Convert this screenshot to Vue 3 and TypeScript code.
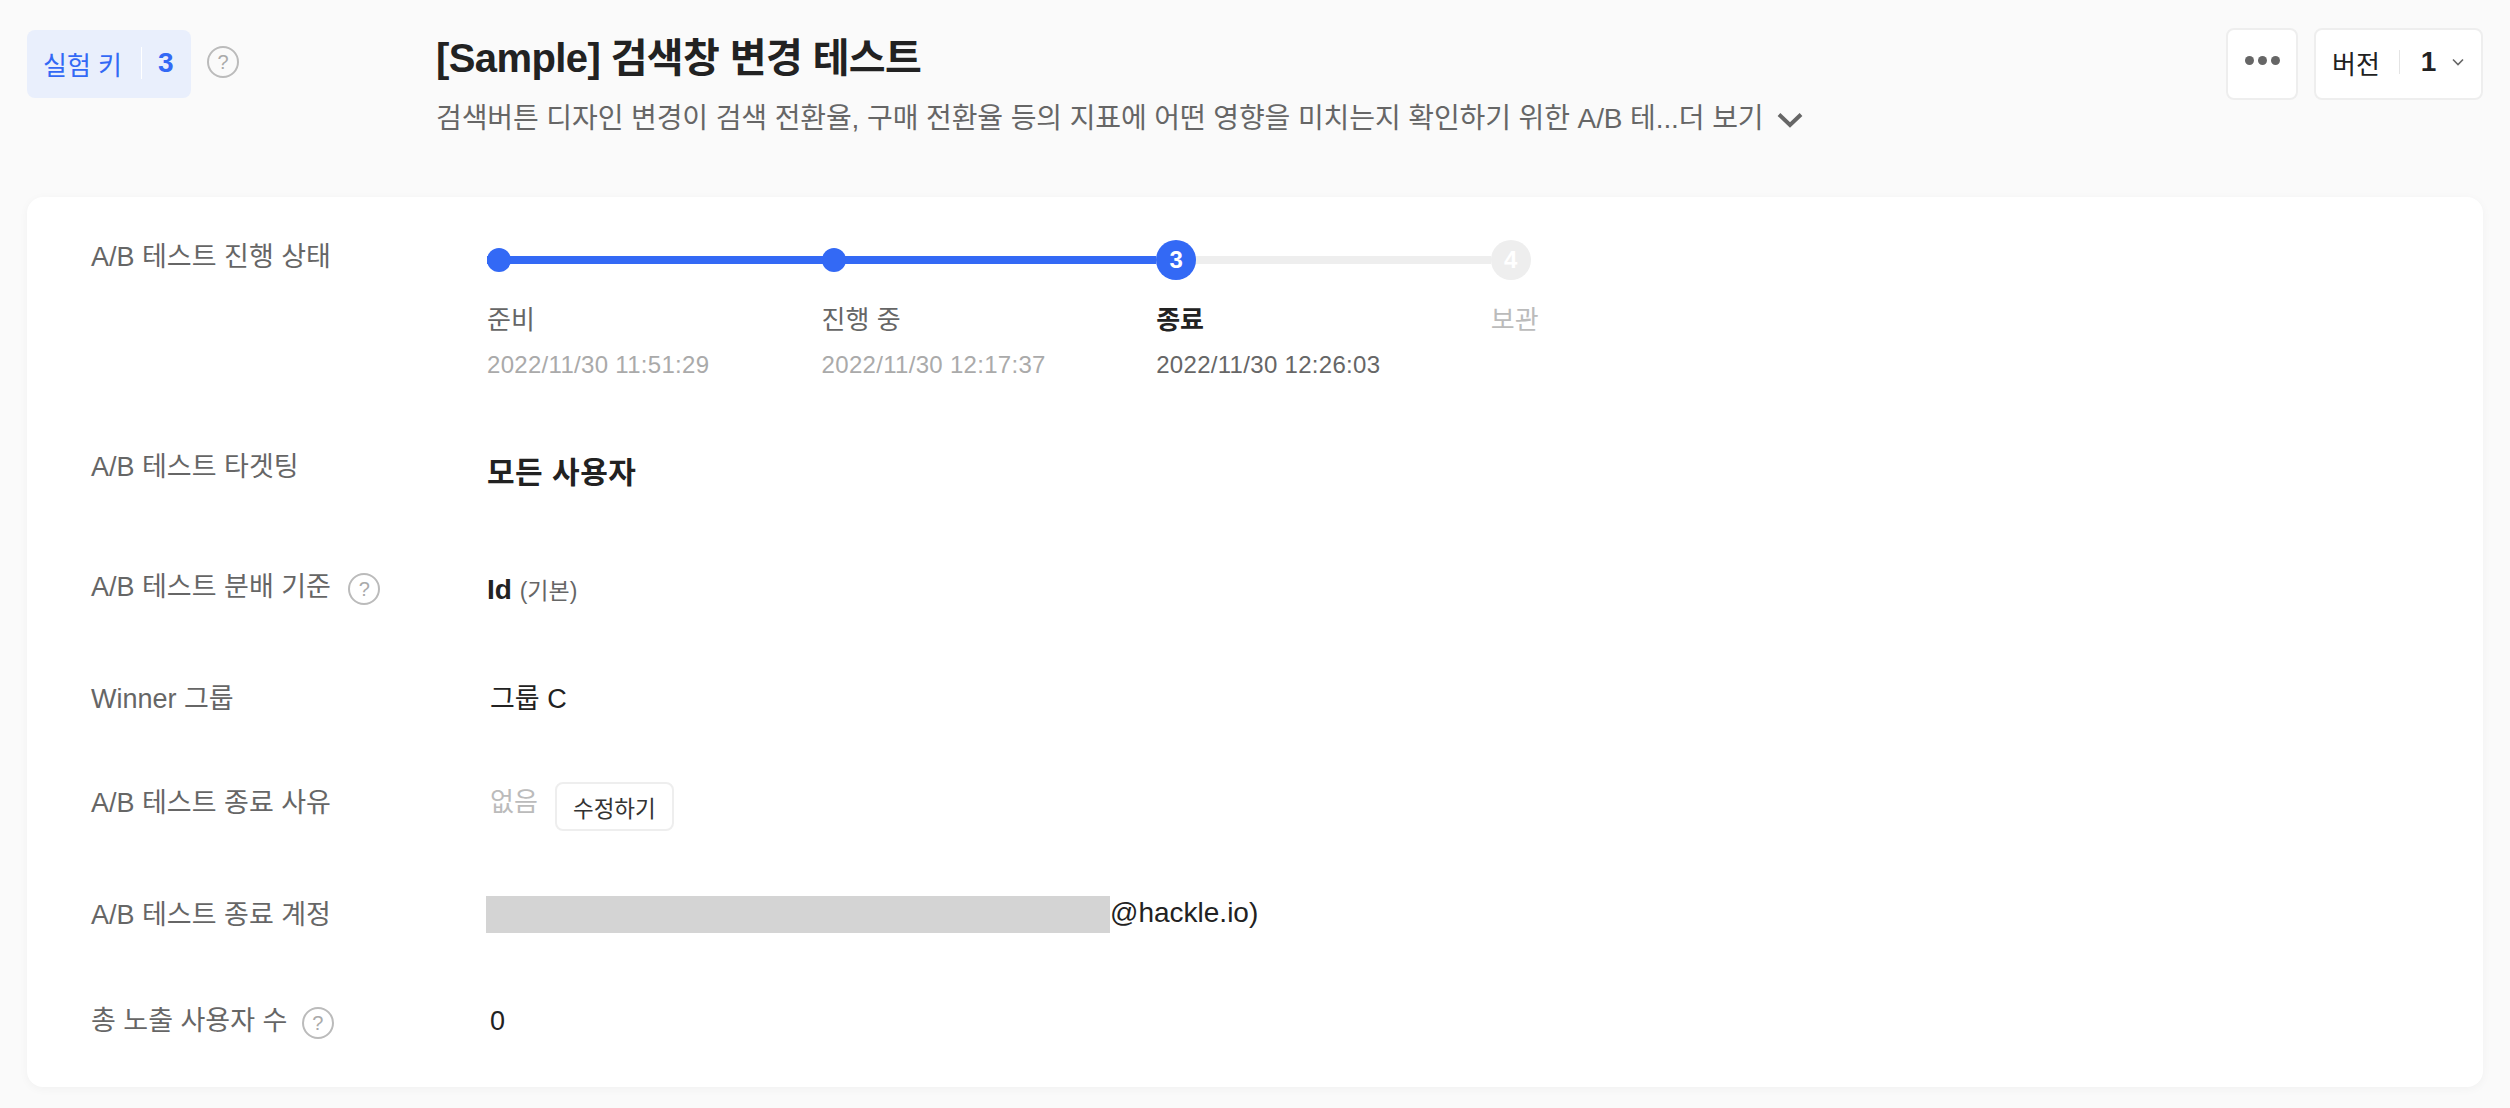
<script setup lang="ts">
interface Step {
  label: string
  date: string
  state: 'done' | 'current' | 'todo'
  num: number
}

const steps: Step[] = [
  { label: '준비', date: '2022/11/30 11:51:29', state: 'done', num: 1 },
  { label: '진행 중', date: '2022/11/30 12:17:37', state: 'done', num: 2 },
  { label: '종료', date: '2022/11/30 12:26:03', state: 'current', num: 3 },
  { label: '보관', date: '', state: 'todo', num: 4 },
]
</script>

<template>
  <div class="page">
    <header class="head">
      <div class="key-wrap">
        <div class="key">
          <span>실험 키</span>
          <i class="key-sep"></i>
          <b>3</b>
        </div>
        <span class="help">?</span>
      </div>
      <div class="head-main">
        <h1>[Sample] 검색창 변경 테스트</h1>
        <p>
          검색버튼 디자인 변경이 검색 전환율, 구매 전환율 등의 지표에 어떤 영향을 미치는지 확인하기 위한 A/B 테...더 보기
          <svg class="more" width="26" height="16" viewBox="0 0 26 16">
            <path d="M2 2.5 13 13 24 2.5" fill="none" stroke="#666" stroke-width="4" />
          </svg>
        </p>
      </div>
      <div class="head-actions">
        <button class="btn dots"><i></i><i></i><i></i></button>
        <button class="btn version">
          <span>버전</span>
          <i class="ver-sep"></i>
          <b>1</b>
          <svg width="12" height="8" viewBox="0 0 12 8">
            <path d="M1 1.5 6 6.5 11 1.5" fill="none" stroke="#666" stroke-width="1.6" />
          </svg>
        </button>
      </div>
    </header>

    <section class="card">
      <div class="label">A/B 테스트 진행 상태</div>
      <div class="stepper">
        <div v-for="s in steps" :key="s.num" class="step" :class="s.state">
          <div class="track">
            <span class="dot">{{ s.state === 'done' ? '' : s.num }}</span>
          </div>
          <div class="step-label">{{ s.label }}</div>
          <div class="step-date">{{ s.date }}</div>
        </div>
      </div>

      <div class="label">A/B 테스트 타겟팅</div>
      <div class="value target">모든 사용자</div>

      <div class="label">A/B 테스트 분배 기준 <span class="help">?</span></div>
      <div class="value basis"><b>Id</b> <small>(기본)</small></div>

      <div class="label">Winner 그룹</div>
      <div class="value plain">그룹 C</div>

      <div class="label">A/B 테스트 종료 사유</div>
      <div class="value reason">
        <span>없음</span>
        <button class="btn edit">수정하기</button>
      </div>

      <div class="label">A/B 테스트 종료 계정</div>
      <div class="value account"><i class="mask"></i><span>@hackle.io)</span></div>

      <div class="label">총 노출 사용자 수 <span class="help tight">?</span></div>
      <div class="value plain">0</div>
    </section>
  </div>
</template>

<style>
body {
  margin: 0;
  background: #fafafa;
}
</style>

<style scoped>
.page {
  height: 1108px;
  box-sizing: border-box;
  padding: 28px 27px 21px;
  background: #fafafa;
  font-family: "Liberation Sans", "Noto Sans CJK KR", sans-serif;
  color: #222;
}

.head {
  display: flex;
  height: 169px;
}

.key-wrap {
  width: 409px;
  display: flex;
  align-items: flex-start;
  gap: 16px;
}

.key {
  margin-top: 2px;
  width: 164px;
  height: 68px;
  box-sizing: border-box;
  display: flex;
  align-items: center;
  padding-left: 16px;
  padding-bottom: 2px;
  border-radius: 8px;
  background: #e9effc;
  color: #3369f5;
  font-size: 26px;
}

.key b {
  font-size: 28px;
}

.key-sep {
  width: 1px;
  height: 32px;
  margin: 0 16px 0 19px;
  background: #fff;
}

.key-wrap .help {
  margin-top: 18px;
}

.help {
  display: inline-flex;
  align-items: center;
  justify-content: center;
  width: 32px;
  height: 32px;
  box-sizing: border-box;
  border: 2px solid #bbb;
  border-radius: 50%;
  color: #aaa;
  font-size: 20px;
  font-weight: 400;
  vertical-align: middle;
}

.head-main {
  flex: 1;
}

h1 {
  margin: 6px 0 0;
  font-size: 40px;
  line-height: 48px;
  font-weight: 700;
  color: #222;
  letter-spacing: -0.6px;
}

.head-main p {
  margin: 19px 0 0;
  font-size: 28px;
  line-height: 36px;
  color: #666;
  letter-spacing: -0.1px;
}

.more {
  margin-left: 6px;
}

.head-actions {
  display: flex;
  gap: 16px;
  align-items: flex-start;
}

.btn {
  box-sizing: border-box;
  border: 2px solid #eee;
  border-radius: 8px;
  background: #fff;
  font-family: inherit;
  color: #222;
  padding: 0;
}

.dots {
  width: 72px;
  height: 72px;
  display: flex;
  align-items: center;
  justify-content: center;
  gap: 4px;
  padding-bottom: 8px;
}

.dots i {
  width: 9px;
  height: 9px;
  border-radius: 50%;
  background: #666;
}

.version {
  width: 169px;
  height: 72px;
  display: flex;
  align-items: center;
  padding-left: 16px;
  padding-bottom: 4px;
  font-size: 26px;
}

.ver-sep {
  width: 1px;
  height: 24px;
  margin: 0 21px 0 19px;
  background: #e4e4e4;
}

.version b {
  font-size: 28px;
  margin-right: 16px;
}

.card {
  height: 890px;
  box-sizing: border-box;
  padding: 39px 64px 0;
  border-radius: 16px;
  background: #fff;
  box-shadow: 0 2px 10px rgba(0, 0, 0, 0.04);
  display: grid;
  grid-template-columns: 396px 1fr;
  grid-template-rows: 210px 120px 112px 104px 112px 106px auto;
  align-items: start;
}

.label {
  margin-top: 1px;
  font-size: 27px;
  line-height: 40px;
  color: #666;
}

.label .help {
  margin-left: 10px;
}

.label .help.tight {
  margin-left: 7px;
}

.stepper {
  display: flex;
}

.step {
  width: 334.6px;
  flex: none;
}

.track {
  height: 40px;
  margin-top: 4px;
  display: flex;
  align-items: center;
  position: relative;
}

.track::before {
  content: "";
  position: absolute;
  left: 0;
  right: 0;
  top: 16px;
  height: 8px;
  background: #3369f5;
}

.step.current .track::before {
  background: #eee;
}

.step.todo .track::before {
  display: none;
}

.dot {
  position: relative;
  display: flex;
  align-items: center;
  justify-content: center;
  width: 40px;
  height: 40px;
  border-radius: 50%;
  background: #3369f5;
  color: #fff;
  font-size: 24px;
  font-weight: 700;
}

.step.done .dot {
  width: 24px;
  height: 24px;
}

.step.todo .dot {
  background: #eee;
}

.step-label {
  margin-top: 20px;
  font-size: 26px;
  line-height: 40px;
  color: #666;
}

.step-date {
  margin-top: 5px;
  font-size: 24px;
  line-height: 40px;
  letter-spacing: 0.3px;
  color: #aaa;
}

.step.current .step-label {
  font-weight: 700;
  color: #222;
}

.step.current .step-date {
  color: #666;
}

.step.todo .step-label {
  color: #bbb;
}

.value {
  font-size: 28px;
  line-height: 40px;
  color: #222;
}

.target {
  margin-top: 7px;
  font-size: 30px;
  font-weight: 700;
  letter-spacing: 0.5px;
}

.basis {
  margin-top: 4px;
}

.basis small {
  font-size: 23px;
  color: #666;
}

.plain {
  margin-top: 1px;
  padding-left: 3px;
  font-size: 27px;
}

.reason {
  padding-left: 3px;
  display: flex;
  align-items: flex-start;
  gap: 17px;
  font-size: 26px;
  color: #bbb;
}

.edit {
  width: 119px;
  height: 49px;
  font-size: 22.5px;
  color: #333;
}

.account {
  margin-top: -1px;
  margin-left: -1px;
  display: flex;
  align-items: flex-start;
}

.mask {
  width: 624px;
  height: 37px;
  margin-top: 3px;
  background: #d4d4d4;
}
</style>
